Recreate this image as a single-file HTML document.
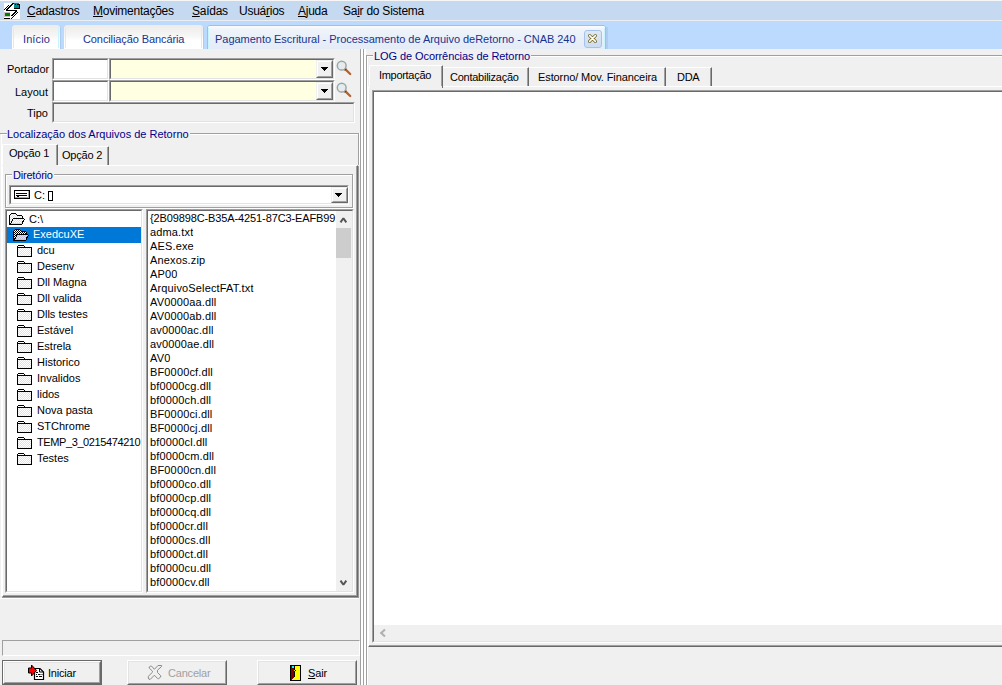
<!DOCTYPE html>
<html><head><meta charset="utf-8">
<style>
*{box-sizing:border-box;margin:0;padding:0}
html,body{width:1002px;height:685px;overflow:hidden;background:#F0F0F0;font-family:"Liberation Sans",sans-serif;font-size:11px;color:#000}
.a{position:absolute}
.t{position:absolute;white-space:pre;line-height:1}
.sunk{position:absolute;border-style:solid;border-width:1px;border-color:#A0A0A0 #FFFFFF #FFFFFF #A0A0A0;}
.sunk:before{content:"";position:absolute;left:0;top:0;right:0;bottom:0;border-style:solid;border-width:1px;border-color:#696969 #E3E3E3 #E3E3E3 #696969}
.sunk1{position:absolute;border-style:solid;border-width:1px;border-color:#A0A0A0 #FFFFFF #FFFFFF #A0A0A0;}
.raise{position:absolute;border-style:solid;border-width:1px;border-color:#FFFFFF #696969 #696969 #FFFFFF;background:#F0F0F0}
.raise:before{content:"";position:absolute;left:0;top:0;right:0;bottom:0;border-style:solid;border-width:1px;border-color:#E3E3E3 #A0A0A0 #A0A0A0 #E3E3E3}
.cbtn{position:absolute;border-style:solid;border-width:1px;border-color:#F0F0F0 #696969 #696969 #F0F0F0;background:#F0F0F0}
.cbtn:before{content:"";position:absolute;left:0;top:0;right:0;bottom:0;border-style:solid;border-width:1px;border-color:#FFFFFF #A0A0A0 #A0A0A0 #FFFFFF}
.grp{position:absolute;border:1px solid #A0A0A0;box-shadow:inset 1px 1px 0 #FFF, 1px 1px 0 #FFF}
.menu{font-size:12px;color:#000;top:5px;letter-spacing:-0.25px}
.u{text-decoration:underline}
.tab{position:absolute;top:25px;height:24px;background:linear-gradient(#F3F3F3,#FFFFFF 40%);border-left:1px solid #C9F3FF;border-right:1px solid #C9F3FF;}
.ttxt{font-size:11px;color:#1A3290;top:34px;letter-spacing:-0.1px}
.drop{position:absolute;width:17px;height:18px}
.tri{position:absolute;width:0;height:0;border-left:4px solid transparent;border-right:3px solid transparent;border-top:4px solid #000}
.blue{color:#00008C}
.fl{letter-spacing:0.15px;clip-path:inset(0 0 0 0)}
.row{position:absolute;white-space:pre;line-height:14px;height:14px}
</style></head><body>
<svg width="0" height="0" style="position:absolute"><defs>
<pattern id="dith" width="2" height="2" patternUnits="userSpaceOnUse"><rect width="2" height="2" fill="#FFFF00"/><rect width="1" height="1" fill="#fff"/><rect x="1" y="1" width="1" height="1" fill="#fff"/></pattern>
<g id="fclosed" shape-rendering="crispEdges"><rect x="1" y="0" width="6" height="1" fill="#000"/><rect x="0" y="1" width="8" height="1" fill="#000"/><rect x="1" y="1" width="6" height="1" fill="#fff"/><rect x="0" y="2" width="15" height="10" fill="#000"/><rect x="1" y="3" width="13" height="8" fill="url(#dith)"/></g>


</defs></svg>
<!-- top bars -->
<div class="a" style="left:0;top:0;width:1002px;height:1px;background:#F6F6F6"></div>
<div class="a" style="left:0;top:1px;width:1002px;height:19px;background:#C5D9F0"></div>
<div class="a" style="left:0;top:20px;width:1002px;height:1px;background:#EDEEF0"></div>
<div class="a" style="left:0;top:21px;width:1002px;height:28px;background:#BCDAFD"></div>

<!-- app icon -->
<svg class="a" style="left:4px;top:3px" width="16" height="16" viewBox="0 0 16 16" shape-rendering="crispEdges"><rect x="0" y="0" width="16" height="16" fill="#fff"/><rect x="10" y="0" width="5" height="5" fill="#008B8B"/><rect x="15" y="1" width="1" height="5" fill="#000"/><rect x="10" y="5" width="6" height="1" fill="#000"/><rect x="11" y="1" width="1" height="1" fill="#000"/><rect x="13" y="1" width="1" height="1" fill="#000"/><rect x="14" y="1" width="1" height="1" fill="#000"/><rect x="8" y="0" width="2" height="1" fill="#000"/><rect x="7" y="1" width="2" height="1" fill="#000"/><rect x="6" y="2" width="2" height="1" fill="#000"/><rect x="5" y="3" width="2" height="1" fill="#000"/><rect x="4" y="4" width="2" height="1" fill="#000"/><rect x="3" y="5" width="2" height="1" fill="#000"/><rect x="2" y="6" width="2" height="1" fill="#000"/><rect x="2" y="7" width="11" height="1" fill="#000"/><rect x="11" y="8" width="2" height="1" fill="#000"/><rect x="10" y="9" width="2" height="1" fill="#000"/><rect x="9" y="10" width="2" height="1" fill="#000"/><rect x="8" y="11" width="2" height="1" fill="#000"/><rect x="7" y="12" width="2" height="1" fill="#000"/><rect x="0" y="6" width="1" height="1" fill="#000"/><rect x="1" y="5" width="1" height="1" fill="#000"/><rect x="2" y="4" width="1" height="1" fill="#000"/><rect x="3" y="3" width="1" height="1" fill="#000"/><rect x="4" y="2" width="1" height="1" fill="#000"/><rect x="7" y="15" width="1" height="1" fill="#000"/><rect x="8" y="14" width="1" height="1" fill="#000"/><rect x="9" y="13" width="1" height="1" fill="#000"/><rect x="10" y="12" width="1" height="1" fill="#000"/><rect x="11" y="11" width="1" height="1" fill="#000"/><rect x="12" y="10" width="1" height="1" fill="#000"/><rect x="13" y="9" width="1" height="1" fill="#000"/><rect x="0" y="9" width="6" height="5" fill="#C8C4C4"/><rect x="1" y="10" width="5" height="3" fill="#008000"/><rect x="0" y="15" width="6" height="1" fill="#000"/></svg>

<!-- menu -->
<div class="t menu" style="left:27px"><span class="u">C</span>adastros</div>
<div class="t menu" style="left:93px"><span class="u">M</span>ovimentações</div>
<div class="t menu" style="left:192px"><span class="u">S</span>aídas</div>
<div class="t menu" style="left:239px">Usuá<span class="u">r</span>ios</div>
<div class="t menu" style="left:298px"><span class="u">A</span>juda</div>
<div class="t menu" style="left:343px">Sa<span class="u">i</span>r do Sistema</div>

<!-- doc tabs -->
<div class="a" style="left:12px;top:25px;width:48px;height:24px;background:linear-gradient(#EEECEA,#F6F6F6 45%,#FFFFFF 65%);clip-path:polygon(2px 0,46px 0,48px 2px,48px 24px,0 24px,0 2px)"></div>
<div class="a" style="left:13px;top:28px;width:1px;height:20px;background:#C6F5FF"></div>
<div class="a" style="left:58px;top:28px;width:1px;height:20px;background:#C6F5FF"></div>
<div class="a" style="left:60px;top:27px;width:1px;height:22px;background:#AECBF2"></div>
<div class="t ttxt" style="left:23px;letter-spacing:0.1px">Início</div>
<div class="a" style="left:64px;top:25px;width:139px;height:24px;background:linear-gradient(#EEECEA,#F6F6F6 45%,#FFFFFF 65%);clip-path:polygon(2px 0,137px 0,139px 2px,139px 24px,0 24px,0 2px)"></div>
<div class="a" style="left:65px;top:28px;width:1px;height:20px;background:#C6F5FF"></div>
<div class="a" style="left:201px;top:28px;width:1px;height:20px;background:#C6F5FF"></div>
<div class="a" style="left:203px;top:27px;width:1px;height:22px;background:#AECBF2"></div>
<div class="t ttxt" style="left:83px">Conciliação Bancária</div>
<div class="a" style="left:207px;top:25px;width:399px;height:24px;background:#9EBFEA;clip-path:polygon(2px 0,397px 0,399px 2px,399px 24px,0 24px,0 2px)"></div>
<div class="a" style="left:208px;top:26px;width:397px;height:23px;background:linear-gradient(#FBFCFE,#EFF4FA 15%,#E8EFF8 60%,#E4ECF7);clip-path:polygon(1px 0,396px 0,397px 1px,397px 23px,0 23px,0 1px)"></div>
<div class="a" style="left:208px;top:28px;width:1px;height:21px;background:#C6F5FF"></div>
<div class="a" style="left:604px;top:28px;width:1px;height:21px;background:#C6F5FF"></div>
<div class="a" style="left:606px;top:27px;width:2px;height:22px;background:#AECBF2"></div>
<div class="t ttxt" style="left:215px;letter-spacing:-0.03px">Pagamento Escritural - Processamento de Arquivo deRetorno - CNAB 240</div>
<div class="a" style="left:584px;top:30px;width:18px;height:18px;border:1px solid #A5C3EA;border-radius:3px;background:linear-gradient(#DCE8F6,#CCDDF2)"></div>
<svg class="a" style="left:587px;top:33px" width="11" height="11" viewBox="0 0 11 11"><path d="M2.6 2.6 L8.4 8.4 M8.4 2.6 L2.6 8.4" stroke="#7B6A25" stroke-width="3.2" stroke-linecap="round"/><path d="M2.6 2.6 L8.4 8.4 M8.4 2.6 L2.6 8.4" stroke="#FFFFFF" stroke-width="1.5" stroke-linecap="round"/></svg>

<!-- LEFT PANEL -->
<div class="t" style="left:7px;top:64px">Portador</div>
<div class="t" style="left:15px;top:87px">Layout</div>
<div class="t" style="left:27px;top:108px">Tipo</div>

<div class="sunk" style="left:52px;top:58px;width:57px;height:22px;background:#fff"></div>
<div class="sunk" style="left:109px;top:58px;width:226px;height:22px;background:#FFFFE1"></div>
<div class="cbtn" style="left:316px;top:60px;width:17px;height:18px"></div>
<svg class="a" style="left:321px;top:67px" width="7" height="4" viewBox="0 0 7 4" shape-rendering="crispEdges"><rect x="0" y="0" width="7" height="1"/><rect x="1" y="1" width="5" height="1"/><rect x="2" y="2" width="3" height="1"/><rect x="3" y="3" width="1" height="1"/></svg>

<div class="sunk" style="left:52px;top:80px;width:57px;height:22px;background:#fff"></div>
<div class="sunk" style="left:109px;top:80px;width:226px;height:22px;background:#FFFFE1"></div>
<div class="cbtn" style="left:316px;top:82px;width:17px;height:18px"></div>
<svg class="a" style="left:321px;top:89px" width="7" height="4" viewBox="0 0 7 4" shape-rendering="crispEdges"><rect x="0" y="0" width="7" height="1"/><rect x="1" y="1" width="5" height="1"/><rect x="2" y="2" width="3" height="1"/><rect x="3" y="3" width="1" height="1"/></svg>

<svg class="a" style="left:334px;top:58px" width="20" height="20" viewBox="0 0 20 20"><path d="M11.2 11.2 L16.2 16.0" stroke="#B5622A" stroke-width="2.3" stroke-linecap="round"/><path d="M10.6 10.6 L11.8 11.8" stroke="#5E3418" stroke-width="2.6"/><circle cx="7.7" cy="7.7" r="4.4" fill="#E7EBED" stroke="#98A8A8" stroke-width="1.5"/></svg>
<svg class="a" style="left:334px;top:80px" width="20" height="20" viewBox="0 0 20 20"><path d="M11.2 11.2 L16.2 16.0" stroke="#B5622A" stroke-width="2.3" stroke-linecap="round"/><path d="M10.6 10.6 L11.8 11.8" stroke="#5E3418" stroke-width="2.6"/><circle cx="7.7" cy="7.7" r="4.4" fill="#E7EBED" stroke="#98A8A8" stroke-width="1.5"/></svg>
<div class="sunk" style="left:52px;top:102px;width:303px;height:21px;background:#F0F0F0"></div>


<!-- Localizacao group -->
<div class="a" style="left:0;top:133px;width:359px;height:1px;background:#A0A0A0"></div>
<div class="a" style="left:1px;top:134px;width:357px;height:1px;background:#FFF"></div>
<div class="a" style="left:1px;top:134px;width:1px;height:462px;background:#FFF"></div>
<div class="a" style="left:358px;top:133px;width:1px;height:32px;background:#A0A0A0"></div>
<div class="a" style="left:359px;top:133px;width:1px;height:32px;background:#FFF"></div>
<div class="t blue" style="left:7px;top:129px;background:#F0F0F0;padding:0 1px 0 0">Localização dos Arquivos de Retorno</div>

<!-- page control Opcao -->
<div class="a" style="left:2px;top:165px;width:356px;height:432px;border-style:solid;border-width:1px;border-color:#FFF #696969 #696969 #FFF"></div>
<div class="a" style="left:3px;top:166px;width:354px;height:430px;border-style:solid;border-width:0 1px 1px 0;border-color:#A0A0A0"></div>
<div class="a" style="left:2px;top:166px;width:357px;height:432px;border-style:solid;border-width:0 1px 1px 0;border-color:#9A9A9A"></div>
<div class="a" style="left:0;top:598px;width:359px;height:1px;background:#FFF"></div>
<div class="a" style="left:2px;top:144px;width:56px;height:22px;background:#F0F0F0;border-style:solid;border-width:1px 1px 0 1px;border-color:#FFF #696969 #FFF #FFF;border-radius:2px 1px 0 0"></div>
<div class="a" style="left:56px;top:145px;width:1px;height:20px;background:#A0A0A0"></div>
<div class="t" style="left:9px;top:148px;letter-spacing:-0.2px">Opção 1</div>
<div class="a" style="left:58px;top:146px;width:51px;height:19px;background:#F0F0F0;border-style:solid;border-width:1px 1px 0 0;border-color:#FFF #696969 #FFF #FFF;border-radius:0 1px 0 0"></div>
<div class="a" style="left:107px;top:147px;width:1px;height:18px;background:#A0A0A0"></div>
<div class="t" style="left:62px;top:150px;letter-spacing:-0.2px">Opção 2</div>
<div class="a" style="left:2px;top:165px;width:56px;height:1px;background:#F0F0F0"></div>

<!-- Diretorio group -->
<div class="a" style="left:5px;top:174px;width:348px;height:34px;border:1px solid #A0A0A0;box-shadow:inset 1px 1px 0 #FFF,1px 1px 0 #FFF"></div>
<div class="t blue" style="left:12px;top:170px;background:#F0F0F0;padding:0 1px 0 1px;letter-spacing:-0.2px">Diretório</div>
<div class="sunk" style="left:9px;top:185px;width:340px;height:20px;background:#fff"></div>
<div class="cbtn" style="left:331px;top:187px;width:17px;height:16px"></div>
<svg class="a" style="left:335px;top:193px" width="7" height="4" viewBox="0 0 7 4" shape-rendering="crispEdges"><rect x="0" y="0" width="7" height="1"/><rect x="1" y="1" width="5" height="1"/><rect x="2" y="2" width="3" height="1"/><rect x="3" y="3" width="1" height="1"/></svg>
<svg class="a" style="left:14px;top:190px" width="16" height="9" viewBox="0 0 16 9" shape-rendering="crispEdges"><rect x="0" y="0" width="16" height="9" fill="#000"/><rect x="1" y="1" width="14" height="7" fill="#A8A8A8"/><rect x="1" y="1" width="13" height="6" fill="#fff"/><rect x="2" y="3" width="11" height="1" fill="#000"/><rect x="2" y="5" width="11" height="1" fill="#000"/><rect x="3" y="6" width="2" height="1" fill="#000"/></svg>
<div class="t" style="left:34px;top:190px">C:</div>
<div class="a" style="left:48px;top:191px;width:5px;height:10px;border:1px solid #000"></div>

<!-- tree -->
<div class="sunk" style="left:5px;top:209px;width:138px;height:384px;background:#fff"></div>
<div class="a" style="left:7px;top:227px;width:134px;height:16px;background:#0078D7"></div>
<svg class="a" style="left:8px;top:211px" width="20" height="16" viewBox="0 0 20 16" shape-rendering="crispEdges"><rect x="2" y="4" width="1" height="1" fill="#FFFF00"/><rect x="2" y="5" width="1" height="1" fill="#FFFFFF"/><rect x="2" y="6" width="1" height="1" fill="#FFFF00"/><rect x="2" y="7" width="1" height="1" fill="#FFFFFF"/><rect x="2" y="8" width="1" height="1" fill="#FFFF00"/><rect x="2" y="9" width="1" height="1" fill="#FFFFFF"/><rect x="2" y="10" width="1" height="1" fill="#FFFF00"/><rect x="2" y="11" width="1" height="1" fill="#FFFFFF"/><rect x="3" y="3" width="1" height="1" fill="#FFFF00"/><rect x="3" y="4" width="1" height="1" fill="#FFFFFF"/><rect x="3" y="5" width="1" height="1" fill="#FFFF00"/><rect x="3" y="6" width="1" height="1" fill="#FFFFFF"/><rect x="3" y="7" width="1" height="1" fill="#FFFF00"/><rect x="3" y="8" width="1" height="1" fill="#FFFFFF"/><rect x="3" y="9" width="1" height="1" fill="#FFFF00"/><rect x="4" y="3" width="1" height="1" fill="#FFFFFF"/><rect x="4" y="4" width="1" height="1" fill="#FFFF00"/><rect x="4" y="5" width="1" height="1" fill="#FFFFFF"/><rect x="4" y="6" width="1" height="1" fill="#FFFF00"/><rect x="4" y="7" width="1" height="1" fill="#FFFFFF"/><rect x="5" y="3" width="1" height="1" fill="#FFFF00"/><rect x="5" y="4" width="1" height="1" fill="#FFFFFF"/><rect x="5" y="5" width="1" height="1" fill="#FFFF00"/><rect x="5" y="6" width="1" height="1" fill="#FFFFFF"/><rect x="6" y="3" width="1" height="1" fill="#FFFFFF"/><rect x="6" y="4" width="1" height="1" fill="#FFFF00"/><rect x="6" y="5" width="1" height="1" fill="#FFFFFF"/><rect x="6" y="6" width="1" height="1" fill="#FFFF00"/><rect x="7" y="3" width="1" height="1" fill="#FFFF00"/><rect x="7" y="4" width="1" height="1" fill="#FFFFFF"/><rect x="7" y="5" width="1" height="1" fill="#FFFF00"/><rect x="7" y="6" width="1" height="1" fill="#FFFFFF"/><rect x="8" y="4" width="1" height="1" fill="#FFFF00"/><rect x="8" y="5" width="1" height="1" fill="#FFFFFF"/><rect x="8" y="6" width="1" height="1" fill="#FFFF00"/><rect x="9" y="5" width="1" height="1" fill="#FFFF00"/><rect x="9" y="6" width="1" height="1" fill="#FFFFFF"/><rect x="10" y="5" width="1" height="1" fill="#FFFFFF"/><rect x="10" y="6" width="1" height="1" fill="#FFFF00"/><rect x="11" y="5" width="1" height="1" fill="#FFFF00"/><rect x="11" y="6" width="1" height="1" fill="#FFFFFF"/><rect x="12" y="5" width="1" height="1" fill="#FFFFFF"/><rect x="12" y="6" width="1" height="1" fill="#FFFF00"/><rect x="13" y="5" width="1" height="1" fill="#FFFF00"/><rect x="13" y="6" width="1" height="1" fill="#FFFFFF"/><rect x="4" y="10" width="1" height="1" fill="#FFFF00"/><rect x="4" y="11" width="1" height="1" fill="#FFFFFF"/><rect x="5" y="8" width="1" height="1" fill="#FFFFFF"/><rect x="5" y="9" width="1" height="1" fill="#FFFF00"/><rect x="5" y="10" width="1" height="1" fill="#FFFFFF"/><rect x="5" y="11" width="1" height="1" fill="#FFFF00"/><rect x="6" y="8" width="1" height="1" fill="#FFFF00"/><rect x="6" y="9" width="1" height="1" fill="#FFFFFF"/><rect x="6" y="10" width="1" height="1" fill="#FFFF00"/><rect x="6" y="11" width="1" height="1" fill="#FFFFFF"/><rect x="7" y="8" width="1" height="1" fill="#FFFFFF"/><rect x="7" y="9" width="1" height="1" fill="#FFFF00"/><rect x="7" y="10" width="1" height="1" fill="#FFFFFF"/><rect x="7" y="11" width="1" height="1" fill="#FFFF00"/><rect x="8" y="8" width="1" height="1" fill="#FFFF00"/><rect x="8" y="9" width="1" height="1" fill="#FFFFFF"/><rect x="8" y="10" width="1" height="1" fill="#FFFF00"/><rect x="8" y="11" width="1" height="1" fill="#FFFFFF"/><rect x="9" y="8" width="1" height="1" fill="#FFFFFF"/><rect x="9" y="9" width="1" height="1" fill="#FFFF00"/><rect x="9" y="10" width="1" height="1" fill="#FFFFFF"/><rect x="9" y="11" width="1" height="1" fill="#FFFF00"/><rect x="10" y="8" width="1" height="1" fill="#FFFF00"/><rect x="10" y="9" width="1" height="1" fill="#FFFFFF"/><rect x="10" y="10" width="1" height="1" fill="#FFFF00"/><rect x="10" y="11" width="1" height="1" fill="#FFFFFF"/><rect x="11" y="8" width="1" height="1" fill="#FFFFFF"/><rect x="11" y="9" width="1" height="1" fill="#FFFF00"/><rect x="11" y="10" width="1" height="1" fill="#FFFFFF"/><rect x="11" y="11" width="1" height="1" fill="#FFFF00"/><rect x="12" y="8" width="1" height="1" fill="#FFFF00"/><rect x="12" y="9" width="1" height="1" fill="#FFFFFF"/><rect x="12" y="10" width="1" height="1" fill="#FFFF00"/><rect x="12" y="11" width="1" height="1" fill="#FFFFFF"/><rect x="13" y="8" width="1" height="1" fill="#FFFFFF"/><rect x="13" y="9" width="1" height="1" fill="#FFFF00"/><rect x="13" y="10" width="1" height="1" fill="#FFFFFF"/><rect x="13" y="11" width="1" height="1" fill="#FFFF00"/><rect x="14" y="8" width="1" height="1" fill="#FFFF00"/><rect x="14" y="9" width="1" height="1" fill="#FFFFFF"/><rect x="15" y="8" width="1" height="1" fill="#FFFFFF"/><rect x="3" y="12" width="1" height="1" fill="#D8D8E8"/><rect x="4" y="12" width="1" height="1" fill="#D8D8E8"/><rect x="5" y="12" width="1" height="1" fill="#D8D8E8"/><rect x="6" y="12" width="1" height="1" fill="#D8D8E8"/><rect x="7" y="12" width="1" height="1" fill="#D8D8E8"/><rect x="8" y="12" width="1" height="1" fill="#D8D8E8"/><rect x="9" y="12" width="1" height="1" fill="#D8D8E8"/><rect x="10" y="12" width="1" height="1" fill="#D8D8E8"/><rect x="11" y="12" width="1" height="1" fill="#D8D8E8"/><rect x="12" y="12" width="1" height="1" fill="#D8D8E8"/><rect x="13" y="12" width="1" height="1" fill="#D8D8E8"/><rect x="1" y="4" width="1" height="1" fill="#000"/><rect x="1" y="5" width="1" height="1" fill="#000"/><rect x="1" y="6" width="1" height="1" fill="#000"/><rect x="1" y="7" width="1" height="1" fill="#000"/><rect x="1" y="8" width="1" height="1" fill="#000"/><rect x="1" y="9" width="1" height="1" fill="#000"/><rect x="1" y="10" width="1" height="1" fill="#000"/><rect x="1" y="11" width="1" height="1" fill="#000"/><rect x="1" y="12" width="1" height="1" fill="#000"/><rect x="1" y="13" width="1" height="1" fill="#000"/><rect x="2" y="3" width="1" height="1" fill="#000"/><rect x="2" y="12" width="1" height="1" fill="#000"/><rect x="2" y="13" width="1" height="1" fill="#000"/><rect x="3" y="2" width="1" height="1" fill="#000"/><rect x="3" y="10" width="1" height="1" fill="#000"/><rect x="3" y="11" width="1" height="1" fill="#000"/><rect x="3" y="13" width="1" height="1" fill="#000"/><rect x="4" y="2" width="1" height="1" fill="#000"/><rect x="4" y="8" width="1" height="1" fill="#000"/><rect x="4" y="9" width="1" height="1" fill="#000"/><rect x="4" y="13" width="1" height="1" fill="#000"/><rect x="5" y="2" width="1" height="1" fill="#000"/><rect x="5" y="7" width="1" height="1" fill="#000"/><rect x="5" y="13" width="1" height="1" fill="#000"/><rect x="6" y="2" width="1" height="1" fill="#000"/><rect x="6" y="7" width="1" height="1" fill="#000"/><rect x="6" y="13" width="1" height="1" fill="#000"/><rect x="7" y="2" width="1" height="1" fill="#000"/><rect x="7" y="7" width="1" height="1" fill="#000"/><rect x="7" y="13" width="1" height="1" fill="#000"/><rect x="8" y="3" width="1" height="1" fill="#000"/><rect x="8" y="7" width="1" height="1" fill="#000"/><rect x="8" y="13" width="1" height="1" fill="#000"/><rect x="9" y="4" width="1" height="1" fill="#000"/><rect x="9" y="7" width="1" height="1" fill="#000"/><rect x="9" y="13" width="1" height="1" fill="#000"/><rect x="10" y="4" width="1" height="1" fill="#000"/><rect x="10" y="7" width="1" height="1" fill="#000"/><rect x="10" y="13" width="1" height="1" fill="#000"/><rect x="11" y="4" width="1" height="1" fill="#000"/><rect x="11" y="7" width="1" height="1" fill="#000"/><rect x="11" y="13" width="1" height="1" fill="#000"/><rect x="12" y="4" width="1" height="1" fill="#000"/><rect x="12" y="7" width="1" height="1" fill="#000"/><rect x="12" y="13" width="1" height="1" fill="#000"/><rect x="13" y="4" width="1" height="1" fill="#000"/><rect x="13" y="7" width="1" height="1" fill="#000"/><rect x="13" y="13" width="1" height="1" fill="#000"/><rect x="14" y="5" width="1" height="1" fill="#000"/><rect x="14" y="6" width="1" height="1" fill="#000"/><rect x="14" y="7" width="1" height="1" fill="#000"/><rect x="14" y="10" width="1" height="1" fill="#000"/><rect x="14" y="11" width="1" height="1" fill="#000"/><rect x="14" y="12" width="1" height="1" fill="#000"/><rect x="15" y="7" width="1" height="1" fill="#000"/><rect x="15" y="9" width="1" height="1" fill="#000"/><rect x="15" y="10" width="1" height="1" fill="#000"/><rect x="16" y="8" width="1" height="1" fill="#000"/></svg>
<div class="t" style="left:29px;top:214px">C:\</div>
<svg class="a" style="left:12px;top:227px" width="20" height="16" viewBox="0 0 20 16" shape-rendering="crispEdges"><rect x="2" y="4" width="1" height="1" fill="#FFFFFF"/><rect x="2" y="5" width="1" height="1" fill="#000000"/><rect x="2" y="6" width="1" height="1" fill="#FFFFFF"/><rect x="2" y="7" width="1" height="1" fill="#000000"/><rect x="2" y="8" width="1" height="1" fill="#FFFFFF"/><rect x="2" y="9" width="1" height="1" fill="#000000"/><rect x="2" y="10" width="1" height="1" fill="#FFFFFF"/><rect x="2" y="11" width="1" height="1" fill="#000000"/><rect x="3" y="3" width="1" height="1" fill="#FFFFFF"/><rect x="3" y="4" width="1" height="1" fill="#000000"/><rect x="3" y="5" width="1" height="1" fill="#FFFFFF"/><rect x="3" y="6" width="1" height="1" fill="#000000"/><rect x="3" y="7" width="1" height="1" fill="#FFFFFF"/><rect x="3" y="8" width="1" height="1" fill="#000000"/><rect x="3" y="9" width="1" height="1" fill="#FFFFFF"/><rect x="4" y="3" width="1" height="1" fill="#000000"/><rect x="4" y="4" width="1" height="1" fill="#FFFFFF"/><rect x="4" y="5" width="1" height="1" fill="#000000"/><rect x="4" y="6" width="1" height="1" fill="#FFFFFF"/><rect x="4" y="7" width="1" height="1" fill="#000000"/><rect x="5" y="3" width="1" height="1" fill="#FFFFFF"/><rect x="5" y="4" width="1" height="1" fill="#000000"/><rect x="5" y="5" width="1" height="1" fill="#FFFFFF"/><rect x="5" y="6" width="1" height="1" fill="#000000"/><rect x="6" y="3" width="1" height="1" fill="#000000"/><rect x="6" y="4" width="1" height="1" fill="#FFFFFF"/><rect x="6" y="5" width="1" height="1" fill="#000000"/><rect x="6" y="6" width="1" height="1" fill="#FFFFFF"/><rect x="7" y="3" width="1" height="1" fill="#FFFFFF"/><rect x="7" y="4" width="1" height="1" fill="#000000"/><rect x="7" y="5" width="1" height="1" fill="#FFFFFF"/><rect x="7" y="6" width="1" height="1" fill="#000000"/><rect x="8" y="4" width="1" height="1" fill="#FFFFFF"/><rect x="8" y="5" width="1" height="1" fill="#000000"/><rect x="8" y="6" width="1" height="1" fill="#FFFFFF"/><rect x="9" y="5" width="1" height="1" fill="#FFFFFF"/><rect x="9" y="6" width="1" height="1" fill="#000000"/><rect x="10" y="5" width="1" height="1" fill="#000000"/><rect x="10" y="6" width="1" height="1" fill="#FFFFFF"/><rect x="11" y="5" width="1" height="1" fill="#FFFFFF"/><rect x="11" y="6" width="1" height="1" fill="#000000"/><rect x="12" y="5" width="1" height="1" fill="#000000"/><rect x="12" y="6" width="1" height="1" fill="#FFFFFF"/><rect x="13" y="5" width="1" height="1" fill="#FFFFFF"/><rect x="13" y="6" width="1" height="1" fill="#000000"/><rect x="4" y="10" width="1" height="1" fill="#FFFF00"/><rect x="4" y="11" width="1" height="1" fill="#C0C0D8"/><rect x="5" y="8" width="1" height="1" fill="#C0C0D8"/><rect x="5" y="9" width="1" height="1" fill="#FFFF00"/><rect x="5" y="10" width="1" height="1" fill="#C0C0D8"/><rect x="5" y="11" width="1" height="1" fill="#FFFF00"/><rect x="6" y="8" width="1" height="1" fill="#FFFF00"/><rect x="6" y="9" width="1" height="1" fill="#C0C0D8"/><rect x="6" y="10" width="1" height="1" fill="#FFFF00"/><rect x="6" y="11" width="1" height="1" fill="#C0C0D8"/><rect x="7" y="8" width="1" height="1" fill="#C0C0D8"/><rect x="7" y="9" width="1" height="1" fill="#FFFF00"/><rect x="7" y="10" width="1" height="1" fill="#C0C0D8"/><rect x="7" y="11" width="1" height="1" fill="#FFFF00"/><rect x="8" y="8" width="1" height="1" fill="#FFFF00"/><rect x="8" y="9" width="1" height="1" fill="#C0C0D8"/><rect x="8" y="10" width="1" height="1" fill="#FFFF00"/><rect x="8" y="11" width="1" height="1" fill="#C0C0D8"/><rect x="9" y="8" width="1" height="1" fill="#C0C0D8"/><rect x="9" y="9" width="1" height="1" fill="#FFFF00"/><rect x="9" y="10" width="1" height="1" fill="#C0C0D8"/><rect x="9" y="11" width="1" height="1" fill="#FFFF00"/><rect x="10" y="8" width="1" height="1" fill="#FFFF00"/><rect x="10" y="9" width="1" height="1" fill="#C0C0D8"/><rect x="10" y="10" width="1" height="1" fill="#FFFF00"/><rect x="10" y="11" width="1" height="1" fill="#C0C0D8"/><rect x="11" y="8" width="1" height="1" fill="#C0C0D8"/><rect x="11" y="9" width="1" height="1" fill="#FFFF00"/><rect x="11" y="10" width="1" height="1" fill="#C0C0D8"/><rect x="11" y="11" width="1" height="1" fill="#FFFF00"/><rect x="12" y="8" width="1" height="1" fill="#FFFF00"/><rect x="12" y="9" width="1" height="1" fill="#C0C0D8"/><rect x="12" y="10" width="1" height="1" fill="#FFFF00"/><rect x="12" y="11" width="1" height="1" fill="#C0C0D8"/><rect x="13" y="8" width="1" height="1" fill="#C0C0D8"/><rect x="13" y="9" width="1" height="1" fill="#FFFF00"/><rect x="13" y="10" width="1" height="1" fill="#C0C0D8"/><rect x="13" y="11" width="1" height="1" fill="#FFFF00"/><rect x="14" y="8" width="1" height="1" fill="#FFFF00"/><rect x="14" y="9" width="1" height="1" fill="#C0C0D8"/><rect x="15" y="8" width="1" height="1" fill="#C0C0D8"/><rect x="3" y="12" width="1" height="1" fill="#C8C8D8"/><rect x="4" y="12" width="1" height="1" fill="#C8C8D8"/><rect x="5" y="12" width="1" height="1" fill="#C8C8D8"/><rect x="6" y="12" width="1" height="1" fill="#C8C8D8"/><rect x="7" y="12" width="1" height="1" fill="#C8C8D8"/><rect x="8" y="12" width="1" height="1" fill="#C8C8D8"/><rect x="9" y="12" width="1" height="1" fill="#C8C8D8"/><rect x="10" y="12" width="1" height="1" fill="#C8C8D8"/><rect x="11" y="12" width="1" height="1" fill="#C8C8D8"/><rect x="12" y="12" width="1" height="1" fill="#C8C8D8"/><rect x="13" y="12" width="1" height="1" fill="#C8C8D8"/><rect x="1" y="4" width="1" height="1" fill="#000"/><rect x="1" y="5" width="1" height="1" fill="#000"/><rect x="1" y="6" width="1" height="1" fill="#000"/><rect x="1" y="7" width="1" height="1" fill="#000"/><rect x="1" y="8" width="1" height="1" fill="#000"/><rect x="1" y="9" width="1" height="1" fill="#000"/><rect x="1" y="10" width="1" height="1" fill="#000"/><rect x="1" y="11" width="1" height="1" fill="#000"/><rect x="1" y="12" width="1" height="1" fill="#000"/><rect x="1" y="13" width="1" height="1" fill="#000"/><rect x="2" y="3" width="1" height="1" fill="#000"/><rect x="2" y="12" width="1" height="1" fill="#000"/><rect x="2" y="13" width="1" height="1" fill="#000"/><rect x="3" y="2" width="1" height="1" fill="#000"/><rect x="3" y="10" width="1" height="1" fill="#000"/><rect x="3" y="11" width="1" height="1" fill="#000"/><rect x="3" y="13" width="1" height="1" fill="#000"/><rect x="4" y="2" width="1" height="1" fill="#000"/><rect x="4" y="8" width="1" height="1" fill="#000"/><rect x="4" y="9" width="1" height="1" fill="#000"/><rect x="4" y="13" width="1" height="1" fill="#000"/><rect x="5" y="2" width="1" height="1" fill="#000"/><rect x="5" y="7" width="1" height="1" fill="#000"/><rect x="5" y="13" width="1" height="1" fill="#000"/><rect x="6" y="2" width="1" height="1" fill="#000"/><rect x="6" y="7" width="1" height="1" fill="#000"/><rect x="6" y="13" width="1" height="1" fill="#000"/><rect x="7" y="2" width="1" height="1" fill="#000"/><rect x="7" y="7" width="1" height="1" fill="#000"/><rect x="7" y="13" width="1" height="1" fill="#000"/><rect x="8" y="3" width="1" height="1" fill="#000"/><rect x="8" y="7" width="1" height="1" fill="#000"/><rect x="8" y="13" width="1" height="1" fill="#000"/><rect x="9" y="4" width="1" height="1" fill="#000"/><rect x="9" y="7" width="1" height="1" fill="#000"/><rect x="9" y="13" width="1" height="1" fill="#000"/><rect x="10" y="4" width="1" height="1" fill="#000"/><rect x="10" y="7" width="1" height="1" fill="#000"/><rect x="10" y="13" width="1" height="1" fill="#000"/><rect x="11" y="4" width="1" height="1" fill="#000"/><rect x="11" y="7" width="1" height="1" fill="#000"/><rect x="11" y="13" width="1" height="1" fill="#000"/><rect x="12" y="4" width="1" height="1" fill="#000"/><rect x="12" y="7" width="1" height="1" fill="#000"/><rect x="12" y="13" width="1" height="1" fill="#000"/><rect x="13" y="4" width="1" height="1" fill="#000"/><rect x="13" y="7" width="1" height="1" fill="#000"/><rect x="13" y="13" width="1" height="1" fill="#000"/><rect x="14" y="5" width="1" height="1" fill="#000"/><rect x="14" y="6" width="1" height="1" fill="#000"/><rect x="14" y="7" width="1" height="1" fill="#000"/><rect x="14" y="10" width="1" height="1" fill="#000"/><rect x="14" y="11" width="1" height="1" fill="#000"/><rect x="14" y="12" width="1" height="1" fill="#000"/><rect x="15" y="7" width="1" height="1" fill="#000"/><rect x="15" y="9" width="1" height="1" fill="#000"/><rect x="15" y="10" width="1" height="1" fill="#000"/><rect x="16" y="8" width="1" height="1" fill="#000"/></svg>
<div class="t" style="left:33px;top:229px;color:#fff">ExedcuXE</div>
<svg class="a" style="left:17px;top:245px" width="16" height="13" viewBox="0 0 16 13"><use href="#fclosed"/></svg>
<div class="t" style="left:37px;top:245px;">dcu</div>
<svg class="a" style="left:17px;top:261px" width="16" height="13" viewBox="0 0 16 13"><use href="#fclosed"/></svg>
<div class="t" style="left:37px;top:261px;">Desenv</div>
<svg class="a" style="left:17px;top:277px" width="16" height="13" viewBox="0 0 16 13"><use href="#fclosed"/></svg>
<div class="t" style="left:37px;top:277px;">Dll Magna</div>
<svg class="a" style="left:17px;top:293px" width="16" height="13" viewBox="0 0 16 13"><use href="#fclosed"/></svg>
<div class="t" style="left:37px;top:293px;">Dll valida</div>
<svg class="a" style="left:17px;top:309px" width="16" height="13" viewBox="0 0 16 13"><use href="#fclosed"/></svg>
<div class="t" style="left:37px;top:309px;">Dlls testes</div>
<svg class="a" style="left:17px;top:325px" width="16" height="13" viewBox="0 0 16 13"><use href="#fclosed"/></svg>
<div class="t" style="left:37px;top:325px;">Estável</div>
<svg class="a" style="left:17px;top:341px" width="16" height="13" viewBox="0 0 16 13"><use href="#fclosed"/></svg>
<div class="t" style="left:37px;top:341px;">Estrela</div>
<svg class="a" style="left:17px;top:357px" width="16" height="13" viewBox="0 0 16 13"><use href="#fclosed"/></svg>
<div class="t" style="left:37px;top:357px;">Historico</div>
<svg class="a" style="left:17px;top:373px" width="16" height="13" viewBox="0 0 16 13"><use href="#fclosed"/></svg>
<div class="t" style="left:37px;top:373px;">Invalidos</div>
<svg class="a" style="left:17px;top:389px" width="16" height="13" viewBox="0 0 16 13"><use href="#fclosed"/></svg>
<div class="t" style="left:37px;top:389px;">lidos</div>
<svg class="a" style="left:17px;top:405px" width="16" height="13" viewBox="0 0 16 13"><use href="#fclosed"/></svg>
<div class="t" style="left:37px;top:405px;">Nova pasta</div>
<svg class="a" style="left:17px;top:421px" width="16" height="13" viewBox="0 0 16 13"><use href="#fclosed"/></svg>
<div class="t" style="left:37px;top:421px;">STChrome</div>
<svg class="a" style="left:17px;top:437px" width="16" height="13" viewBox="0 0 16 13"><use href="#fclosed"/></svg>
<div class="t" style="left:37px;top:437px;letter-spacing:-0.4px;">TEMP_3_0215474210</div>
<svg class="a" style="left:17px;top:453px" width="16" height="13" viewBox="0 0 16 13"><use href="#fclosed"/></svg>
<div class="t" style="left:37px;top:453px;">Testes</div>

<!-- file list -->
<div class="sunk" style="left:146px;top:209px;width:208px;height:384px;background:#fff"></div>
<div class="a" style="left:336px;top:211px;width:16px;height:380px;background:#F0F0F0"></div>
<div class="a" style="left:336px;top:228px;width:15px;height:30px;background:#CDCDCD"></div>
<svg class="a" style="left:339px;top:215px" width="10" height="9" viewBox="0 0 10 9"><path d="M1.5 7.4 L4.4 3.2 L7.3 7.4" stroke="#555" stroke-width="2" fill="none" stroke-linejoin="bevel"/></svg>
<svg class="a" style="left:339px;top:578px" width="10" height="9" viewBox="0 0 10 9"><path d="M1.5 2.6 L4.4 6.8 L7.3 2.6" stroke="#555" stroke-width="2" fill="none" stroke-linejoin="bevel"/></svg>
<div class="t fl" style="left:150px;top:213px;width:186px;overflow:hidden;height:14px;letter-spacing:-0.12px">{2B09898C-B35A-4251-87C3-EAFB99</div>
<div class="t fl" style="left:150px;top:227px">adma.txt</div>
<div class="t fl" style="left:150px;top:241px">AES.exe</div>
<div class="t fl" style="left:150px;top:255px">Anexos.zip</div>
<div class="t fl" style="left:150px;top:269px">AP00</div>
<div class="t fl" style="left:150px;top:283px">ArquivoSelectFAT.txt</div>
<div class="t fl" style="left:150px;top:297px">AV0000aa.dll</div>
<div class="t fl" style="left:150px;top:311px">AV0000ab.dll</div>
<div class="t fl" style="left:150px;top:325px">av0000ac.dll</div>
<div class="t fl" style="left:150px;top:339px">av0000ae.dll</div>
<div class="t fl" style="left:150px;top:353px">AV0</div>
<div class="t fl" style="left:150px;top:367px">BF0000cf.dll</div>
<div class="t fl" style="left:150px;top:381px">bf0000cg.dll</div>
<div class="t fl" style="left:150px;top:395px">bf0000ch.dll</div>
<div class="t fl" style="left:150px;top:409px">BF0000ci.dll</div>
<div class="t fl" style="left:150px;top:423px">BF0000cj.dll</div>
<div class="t fl" style="left:150px;top:437px">bf0000cl.dll</div>
<div class="t fl" style="left:150px;top:451px">bf0000cm.dll</div>
<div class="t fl" style="left:150px;top:465px">BF0000cn.dll</div>
<div class="t fl" style="left:150px;top:479px">bf0000co.dll</div>
<div class="t fl" style="left:150px;top:493px">bf0000cp.dll</div>
<div class="t fl" style="left:150px;top:507px">bf0000cq.dll</div>
<div class="t fl" style="left:150px;top:521px">bf0000cr.dll</div>
<div class="t fl" style="left:150px;top:535px">bf0000cs.dll</div>
<div class="t fl" style="left:150px;top:549px">bf0000ct.dll</div>
<div class="t fl" style="left:150px;top:563px">bf0000cu.dll</div>
<div class="t fl" style="left:150px;top:577px">bf0000cv.dll</div>

<!-- status panel -->
<div class="a" style="left:2px;top:640px;width:358px;height:16px;border-style:solid;border-width:1px;border-color:#A0A0A0 #FFF #FFF #A0A0A0"></div>

<!-- buttons -->
<div class="a" style="left:2px;top:660px;width:100px;height:25px;border:1px solid #696969"></div>
<div class="raise" style="left:3px;top:661px;width:98px;height:23px"></div>
<svg class="a" style="left:24px;top:662px" width="24" height="22" viewBox="0 0 24 22">
<path d="M10.5 6.5 L16 6.5 L19.5 10 L19.5 17.5 L10.5 17.5 Z" fill="#fff" stroke="#000" stroke-width="1.2"/>
<path d="M15.5 7 L15.5 10 L19 10" fill="none" stroke="#000" stroke-width="1"/>
<path d="M12 10.5 H14 M12 12.5 H13 M14 12.5 H16.5 M17.5 12.5 H18.5 M12 14.5 H14 M15 14.5 H18" stroke="#000" stroke-width="1.1"/>
<path d="M4.5 6 L7.5 6 L7.5 3 L12.6 8.5 L7.5 14 L7.5 11 L4.5 11 Z" fill="#FF0000" stroke="#000" stroke-width="1"/>
</svg>
<div class="t" style="left:48px;top:668px;letter-spacing:-0.2px">Iniciar</div>
<div class="raise" style="left:127px;top:660px;width:100px;height:25px"></div>
<svg class="a" style="left:144px;top:662px" width="24" height="22" viewBox="0 0 24 22"><path d="M5.2 5 L6.5 4.2 L7.7 4.2 L10.4 7.3 L14 3.5 L17.6 3.5 L17.6 4.5 L13.5 8.2 L13.5 10.5 L16.7 13.7 L16.7 15 L14.5 16.7 L13.8 16.7 L10.4 13.2 L6.3 17.3 L5 17.3 L4.3 16 L4.3 14.3 L8.5 10.2 L8.5 9.3 L5.2 6 Z" fill="none" stroke="#8A8A8A" stroke-width="1"/></svg>
<div class="t" style="left:168px;top:668px;color:#A0A0A0;letter-spacing:-0.2px">Cancelar</div>
<div class="raise" style="left:257px;top:660px;width:100px;height:25px"></div>
<svg class="a" style="left:286px;top:662px" width="24" height="22" viewBox="0 0 24 22" shape-rendering="crispEdges"><rect x="4" y="3" width="11" height="16" fill="#000"/><rect x="5" y="4" width="9" height="14" fill="#FFFF00"/><path d="M5 4 H8 V15 L6 18 H5 Z" fill="#800000"/><rect x="8" y="4" width="1" height="11" fill="#000"/><rect x="6" y="4" width="1.5" height="2" fill="#00FFFF"/><rect x="8" y="8" width="1" height="1" fill="#FFFF00"/><rect x="9" y="8" width="1" height="1" fill="#000"/></svg>
<div class="t" style="left:308px;top:668px;letter-spacing:-0.1px"><span class="u">S</span>air</div>

<!-- splitter -->
<div class="a" style="left:360px;top:49px;width:1px;height:636px;background:#A0A0A0"></div>
<div class="a" style="left:361px;top:49px;width:2px;height:636px;background:#FFF"></div>
<div class="a" style="left:363px;top:49px;width:1px;height:636px;background:#A0A0A0"></div>
<div class="a" style="left:364px;top:49px;width:2px;height:636px;background:#FFF"></div>

<!-- LOG group -->
<div class="a" style="left:366px;top:55px;width:640px;height:640px;border:1px solid #A0A0A0;box-shadow:inset 1px 1px 0 #FFF"></div>
<div class="t blue" style="left:373px;top:51px;background:#F0F0F0;padding:0 1px 0 1px;letter-spacing:-0.08px">LOG de Ocorrências de Retorno</div>

<!-- right page control -->
<div class="a" style="left:368px;top:86px;width:640px;height:561px;border-style:solid;border-width:1px;border-color:#FFF #696969 #696969 #FFF"></div>
<div class="a" style="left:369px;top:87px;width:640px;height:559px;border-style:solid;border-width:0 0 1px 0;border-color:#A0A0A0"></div>
<div class="a" style="left:369px;top:65px;width:74px;height:23px;background:#F0F0F0;border-style:solid;border-width:1px 1px 0 1px;border-color:#FFF #696969 #FFF #FFF;border-radius:2px 1px 0 0"></div>
<div class="a" style="left:441px;top:66px;width:1px;height:21px;background:#A0A0A0"></div>
<div class="t" style="left:379px;top:70px;letter-spacing:-0.3px">Importação</div>
<div class="a" style="left:443px;top:67px;width:86px;height:19px;border-style:solid;border-width:1px 1px 0 0;border-color:#FFF #696969 #FFF #FFF"></div>
<div class="a" style="left:527px;top:68px;width:1px;height:18px;background:#A0A0A0"></div>
<div class="t" style="left:450px;top:72px;letter-spacing:-0.25px">Contabilização</div>
<div class="a" style="left:529px;top:67px;width:137px;height:19px;border-style:solid;border-width:1px 1px 0 0;border-color:#FFF #696969 #FFF #FFF"></div>
<div class="a" style="left:664px;top:68px;width:1px;height:18px;background:#A0A0A0"></div>
<div class="t" style="left:538px;top:72px;letter-spacing:-0.1px">Estorno/ Mov. Financeira</div>
<div class="a" style="left:666px;top:67px;width:46px;height:19px;border-style:solid;border-width:1px 1px 0 0;border-color:#FFF #696969 #FFF #FFF"></div>
<div class="a" style="left:710px;top:68px;width:1px;height:18px;background:#A0A0A0"></div>
<div class="t" style="left:677px;top:72px;letter-spacing:-0.3px">DDA</div>
<div class="a" style="left:369px;top:86px;width:73px;height:1px;background:#F0F0F0"></div>

<!-- memo -->
<div class="sunk" style="left:372px;top:90px;width:640px;height:553px;background:#fff"></div>
<div class="a" style="left:374px;top:625px;width:640px;height:16px;background:#F0F0F0"></div>
<svg class="a" style="left:378px;top:628px" width="10" height="10" viewBox="0 0 10 10"><path d="M7 1.5 L3.2 5 L7 8.5" stroke="#B0B0B0" stroke-width="2.1" fill="none"/></svg>
</body></html>
